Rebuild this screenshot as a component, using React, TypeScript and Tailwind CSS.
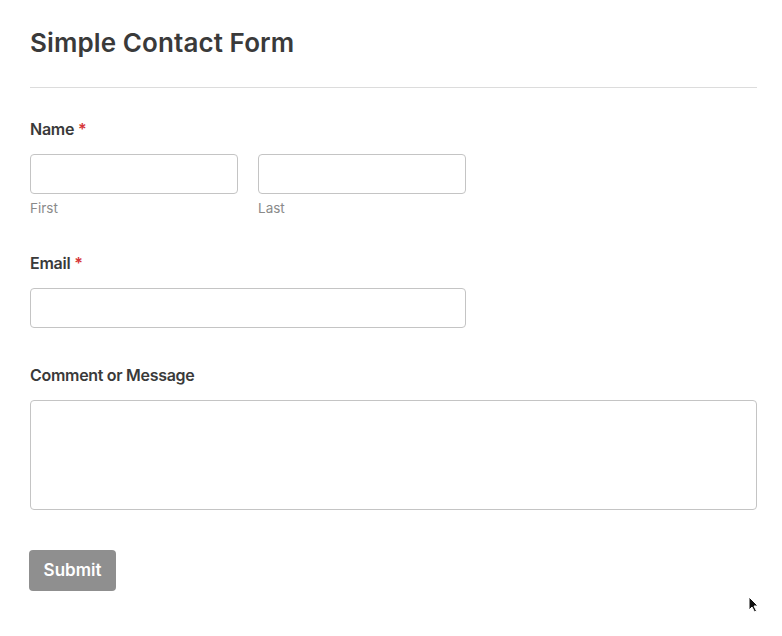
import React from "react";

const App = () => {
  return (
    <div
      className="relative min-h-[636px] w-full bg-white px-[30px] pt-[27px] text-[#3a3a3a]"
      style={{ fontFamily: "Inter, 'Liberation Sans', sans-serif" }}
    >
      <h1 className="text-[26px] leading-[32px] font-semibold tracking-[0.1px]">Simple Contact Form</h1>
      <div className="mt-[28px] mr-[-5px] h-px bg-[#dcdcdc]" />

      <form className="flex flex-col">
        <label className="mt-[31px] text-[16px] leading-[20px] font-semibold tracking-[-0.25px]">
          Name <span className="text-[#d63638]">*</span>
        </label>
        <div className="mt-[15px] flex gap-[20px]">
          <div className="flex flex-col">
            <input type="text" className="h-[40px] w-[208px] rounded-[4px] border border-[#c4c4c4]" />
            <span className="mt-[6px] text-[13.5px] leading-[16px] text-[#8a8a8a]">First</span>
          </div>
          <div className="flex flex-col">
            <input type="text" className="h-[40px] w-[208px] rounded-[4px] border border-[#c4c4c4]" />
            <span className="mt-[6px] text-[13.5px] leading-[16px] text-[#8a8a8a]">Last</span>
          </div>
        </div>

        <label className="mt-[37px] text-[16px] leading-[20px] font-semibold tracking-[-0.25px]">
          Email <span className="text-[#d63638]">*</span>
        </label>
        <input type="email" className="mt-[15px] h-[40px] w-[436px] rounded-[4px] border border-[#c4c4c4]" />

        <label className="mt-[37px] text-[16px] leading-[20px] font-semibold tracking-[-0.3px]">Comment or Message</label>
        <textarea className="mt-[15px] h-[110px] w-[727px] resize-none rounded-[4px] border border-[#c4c4c4]" />

        <div className="mt-[40px]">
          <button
            type="button"
            className="ml-[-1px] h-[41px] w-[87px] rounded-[4px] bg-[#8f8f8f] text-[17px] font-semibold text-white"
          >
            Submit
          </button>
        </div>
      </form>

      <svg className="absolute left-[748px] top-[596px]" width="12" height="18" viewBox="0 0 12 18">
        <path d="M1 1 L1 14 L4 11 L6.5 16 L8.5 15 L6 10 L10 10 Z" fill="#111" stroke="#fff" strokeWidth="1" />
      </svg>
    </div>
  );
};

export default App;
